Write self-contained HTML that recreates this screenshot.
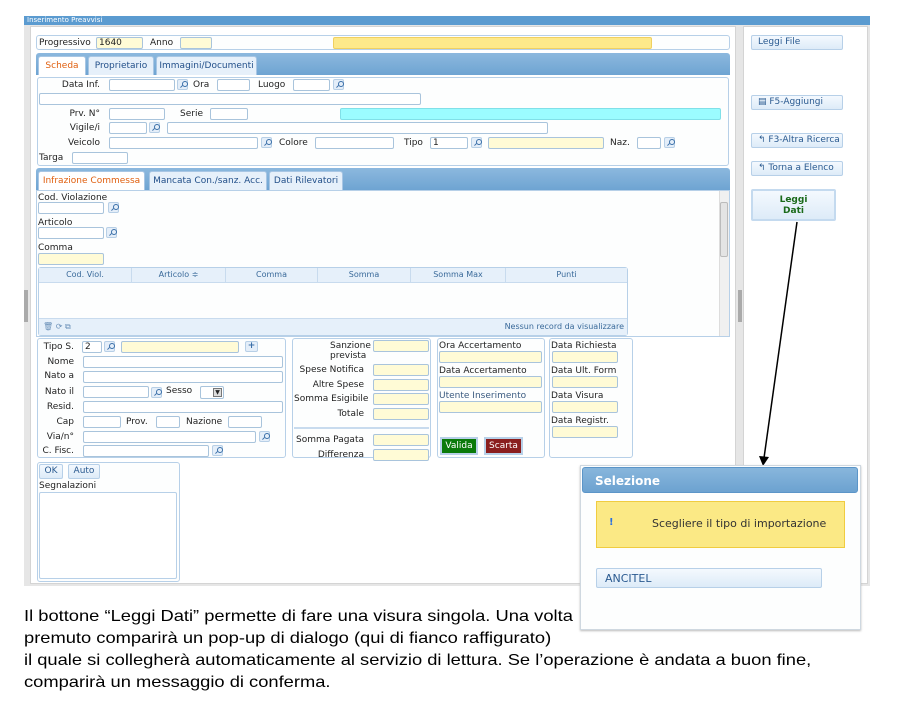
<!DOCTYPE html>
<html><head><meta charset="utf-8">
<style>
*{margin:0;padding:0;box-sizing:border-box}
body{width:905px;height:722px;background:#fff;position:relative;overflow:hidden;font-family:"DejaVu Sans","Liberation Sans",sans-serif;font-size:9px;color:#222}
div,span{position:absolute}
.i{height:12px;border:1px solid #a9c4dc;border-radius:2px;background:#fff;font-size:9px;padding-left:2px;line-height:10px}
.y{background:#fffbd6}
.l{white-space:nowrap;font-size:9px;line-height:11px}
.s{width:11px;height:11px;border:1px solid #b7cfe6;border-radius:2px;background:#e4eef9}
.s:after{content:"";position:absolute;left:4px;top:1px;width:4px;height:4px;border:1px solid #3a6fa8;border-radius:50%}
.s:before{content:"";position:absolute;left:2px;top:6px;width:3px;height:1px;background:#3a6fa8;transform:rotate(-45deg)}
.box{border:1px solid #b7d0e8;border-radius:3px;background:#fdfefe}
.tabstrip{background:linear-gradient(#8cb8de,#6ea4d2);border-radius:3px 3px 0 0}
.tab{top:3px;height:19px;background:#e6f0fa;border:1px solid #a8c6e4;border-bottom:none;border-radius:3px 3px 0 0;color:#23508a;text-align:center;line-height:18px;font-size:9px}
.tab.a{background:#fff;color:#e06010}
.btn{border:1px solid #b7d0e8;border-radius:2px;background:linear-gradient(#f4f9fe,#ddebf8);color:#2a5a90;font-size:9px;line-height:13px;padding-left:6px}
.r{text-align:right}
</style></head><body>
<div style="left:24px;top:16px;width:846px;height:570px;background:#e6e6e6"></div>
<div style="left:24px;top:16px;width:846px;height:9px;background:#5b9bd0;color:#fff;font-size:7px;line-height:9px;padding-left:3px">Inserimento Preavvisi</div>
<div style="left:30px;top:26px;width:706px;height:558px;background:#fff;border:1px solid #d4d4d4"></div>
<div style="left:743px;top:26px;width:125px;height:558px;background:#fff;border:1px solid #d4d4d4"></div>
<div style="left:738px;top:290px;width:4px;height:32px;background:#aaa"></div>
<div style="left:24px;top:290px;width:4px;height:32px;background:#aaa"></div>

<div class="box" style="left:36px;top:35px;width:694px;height:15px"></div>
<span class="l" style="left:39px;top:38px">Progressivo</span>
<div class="i y" style="left:96px;top:37px;width:47px">1640</div>
<span class="l" style="left:150px;top:38px">Anno</span>
<div class="i y" style="left:180px;top:37px;width:32px"></div>
<div class="i" style="left:333px;top:37px;width:319px;background:#fde98a;border-color:#f0d060"></div>

<div class="tabstrip" style="left:36px;top:53px;width:694px;height:22px"></div>
<div class="tab a" style="left:38px;top:56px;width:48px">Scheda</div>
<div class="tab" style="left:88px;top:56px;width:66px">Proprietario</div>
<div class="tab" style="left:156px;top:56px;width:101px">Immagini/Documenti</div>
<div class="box" style="left:37px;top:77px;width:692px;height:89px"></div>
<span class="l r" style="left:50px;top:80px;width:50px">Data Inf.</span>
<div class="i" style="left:109px;top:79px;width:66px"></div>
<div class="s" style="left:177px;top:79px"></div>
<span class="l" style="left:193px;top:80px">Ora</span>
<div class="i" style="left:217px;top:79px;width:33px"></div>
<span class="l" style="left:258px;top:80px">Luogo</span>
<div class="i" style="left:293px;top:79px;width:37px"></div>
<div class="s" style="left:333px;top:79px"></div>
<div class="i" style="left:39px;top:93px;width:382px"></div>
<span class="l r" style="left:50px;top:109px;width:50px">Prv. N°</span>
<div class="i" style="left:109px;top:108px;width:56px"></div>
<span class="l" style="left:180px;top:109px">Serie</span>
<div class="i" style="left:210px;top:108px;width:38px"></div>
<div class="i" style="left:340px;top:108px;width:381px;background:#9bfcff;border-color:#80e0e8"></div>
<span class="l r" style="left:50px;top:123px;width:50px">Vigile/i</span>
<div class="i" style="left:109px;top:122px;width:38px"></div>
<div class="s" style="left:149px;top:122px"></div>
<div class="i" style="left:167px;top:122px;width:381px"></div>
<span class="l r" style="left:50px;top:138px;width:50px">Veicolo</span>
<div class="i" style="left:109px;top:137px;width:149px"></div>
<div class="s" style="left:261px;top:137px"></div>
<span class="l" style="left:279px;top:138px">Colore</span>
<div class="i" style="left:315px;top:137px;width:79px"></div>
<span class="l" style="left:404px;top:138px">Tipo</span>
<div class="i" style="left:430px;top:137px;width:38px">1</div>
<div class="s" style="left:471px;top:137px"></div>
<div class="i y" style="left:488px;top:137px;width:116px"></div>
<span class="l" style="left:610px;top:138px">Naz.</span>
<div class="i" style="left:637px;top:137px;width:24px"></div>
<div class="s" style="left:664px;top:137px"></div>
<span class="l" style="left:39px;top:153px">Targa</span>
<div class="i" style="left:72px;top:152px;width:56px"></div>

<div class="tabstrip" style="left:36px;top:168px;width:694px;height:22px"></div>
<div class="tab a" style="left:38px;top:171px;width:107px">Infrazione Commessa</div>
<div class="tab" style="left:149px;top:171px;width:118px">Mancata Con./sanz. Acc.</div>
<div class="tab" style="left:269px;top:171px;width:74px">Dati Rilevatori</div>
<div class="box" style="left:36px;top:190px;width:694px;height:147px;border-radius:0"></div>
<div style="left:719px;top:191px;width:10px;height:145px;background:#f0f0f0;border-left:1px solid #ddd"></div>
<div style="left:720px;top:202px;width:8px;height:55px;background:#e4e4e4;border:1px solid #bbb;border-radius:2px"></div>
<span class="l" style="left:38px;top:193px">Cod. Violazione</span>
<div class="i" style="left:38px;top:202px;width:66px"></div>
<div class="s" style="left:108px;top:202px"></div>
<span class="l" style="left:38px;top:218px">Articolo</span>
<div class="i" style="left:38px;top:227px;width:66px"></div>
<div class="s" style="left:106px;top:227px"></div>
<span class="l" style="left:38px;top:243px">Comma</span>
<div class="i y" style="left:38px;top:253px;width:66px"></div>
<div style="left:38px;top:267px;width:590px;height:69px;border:1px solid #b7d0e8;border-radius:3px;background:#fdfefe"></div>
<div style="left:39px;top:268px;width:588px;height:15px;background:#e6f0fa;border-bottom:1px solid #c8dbee;color:#3a6a9a;font-size:8px;line-height:14px">
<span style="left:0;width:93px;text-align:center;border-right:1px solid #c8dbee;height:15px">Cod. Viol.</span>
<span style="left:93px;width:94px;text-align:center;border-right:1px solid #c8dbee;height:15px">Articolo ≑</span>
<span style="left:187px;width:92px;text-align:center;border-right:1px solid #c8dbee;height:15px">Comma</span>
<span style="left:279px;width:93px;text-align:center;border-right:1px solid #c8dbee;height:15px">Somma</span>
<span style="left:372px;width:95px;text-align:center;border-right:1px solid #c8dbee;height:15px">Somma Max</span>
<span style="left:467px;width:121px;text-align:center">Punti</span>
</div>
<div style="left:39px;top:318px;width:588px;height:17px;background:#e6f0fa;border-top:1px solid #c8dbee;color:#3a6a9a;font-size:8px;line-height:16px">
<span style="left:4px;color:#6a90b8">🗑 ⟳ ⧉</span>
<span style="right:3px">Nessun record da visualizzare</span>
</div>

<div class="box" style="left:37px;top:338px;width:249px;height:120px"></div>
<span class="l r" style="left:40px;top:342px;width:34px">Tipo S.</span>
<div class="i" style="left:82px;top:341px;width:20px">2</div>
<div class="s" style="left:104px;top:341px"></div>
<div class="i y" style="left:121px;top:341px;width:118px"></div>
<div style="left:245px;top:341px;width:13px;height:11px;border:1px solid #b7cfe6;border-radius:2px;background:#e4eef9;text-align:center;line-height:9px;color:#3a6fa8;font-weight:bold">+</div>
<span class="l r" style="left:40px;top:357px;width:34px">Nome</span>
<div class="i" style="left:83px;top:356px;width:200px"></div>
<span class="l r" style="left:40px;top:371px;width:34px">Nato a</span>
<div class="i" style="left:83px;top:371px;width:200px"></div>
<span class="l r" style="left:40px;top:387px;width:34px">Nato il</span>
<div class="i" style="left:83px;top:386px;width:66px"></div>
<div class="s" style="left:151px;top:387px"></div>
<span class="l" style="left:166px;top:386px">Sesso</span>
<div class="i" style="left:200px;top:386px;width:24px;height:13px"><span style="right:1px;top:1px;width:9px;height:9px;background:#ddd;border:1px solid #777;font-size:6px;text-align:center;line-height:8px">▼</span></div>
<span class="l r" style="left:40px;top:402px;width:34px">Resid.</span>
<div class="i" style="left:83px;top:401px;width:200px"></div>
<span class="l r" style="left:40px;top:417px;width:34px">Cap</span>
<div class="i" style="left:83px;top:416px;width:38px"></div>
<span class="l" style="left:126px;top:417px">Prov.</span>
<div class="i" style="left:156px;top:416px;width:24px"></div>
<span class="l" style="left:186px;top:417px">Nazione</span>
<div class="i" style="left:228px;top:416px;width:34px"></div>
<span class="l r" style="left:40px;top:432px;width:34px">Via/n°</span>
<div class="i" style="left:83px;top:431px;width:173px"></div>
<div class="s" style="left:259px;top:431px"></div>
<span class="l r" style="left:40px;top:446px;width:34px">C. Fisc.</span>
<div class="i" style="left:83px;top:445px;width:126px"></div>
<div class="s" style="left:212px;top:445px"></div>

<div class="box" style="left:292px;top:338px;width:139px;height:120px"></div>
<span class="l" style="left:330px;top:341px">Sanzione</span>
<span class="l" style="left:330px;top:351px">prevista</span>
<span class="l r" style="left:294px;top:365px;width:70px">Spese Notifica</span>
<span class="l r" style="left:294px;top:380px;width:70px">Altre Spese</span>
<span class="l r" style="left:294px;top:394px;width:70px">Somma Esigibile</span>
<span class="l r" style="left:294px;top:409px;width:70px">Totale</span>
<span class="l r" style="left:294px;top:435px;width:70px">Somma Pagata</span>
<span class="l r" style="left:294px;top:450px;width:70px">Differenza</span>
<div class="i y" style="left:373px;top:340px;width:56px"></div>
<div class="i y" style="left:373px;top:364px;width:56px"></div>
<div class="i y" style="left:373px;top:379px;width:56px"></div>
<div class="i y" style="left:373px;top:393px;width:56px"></div>
<div class="i y" style="left:373px;top:408px;width:56px"></div>
<div style="left:294px;top:427px;width:135px;height:2px;border:1px solid #c8dbee"></div>
<div class="i y" style="left:373px;top:434px;width:56px"></div>
<div class="i y" style="left:373px;top:449px;width:56px"></div>

<div class="box" style="left:437px;top:338px;width:108px;height:120px"></div>
<span class="l" style="left:439px;top:341px">Ora Accertamento</span>
<div class="i y" style="left:439px;top:351px;width:103px"></div>
<span class="l" style="left:439px;top:366px">Data Accertamento</span>
<div class="i y" style="left:439px;top:376px;width:103px"></div>
<span class="l" style="left:439px;top:391px;color:#3a5a80">Utente Inserimento</span>
<div class="i y" style="left:439px;top:401px;width:103px"></div>
<div style="left:440px;top:437px;width:38px;height:18px;background:#0a7a0a;border:2px solid #b7d0e8;color:#fff;text-align:center;line-height:14px;font-size:9px">Valida</div>
<div style="left:484px;top:437px;width:39px;height:18px;background:#8a1e1e;border:2px solid #b7d0e8;color:#fff;text-align:center;line-height:14px;font-size:9px">Scarta</div>
<div class="box" style="left:549px;top:338px;width:84px;height:120px"></div>
<span class="l" style="left:551px;top:341px">Data Richiesta</span>
<div class="i y" style="left:552px;top:351px;width:66px"></div>
<span class="l" style="left:551px;top:366px">Data Ult. Form</span>
<div class="i y" style="left:552px;top:376px;width:66px"></div>
<span class="l" style="left:551px;top:391px">Data Visura</span>
<div class="i y" style="left:552px;top:401px;width:66px"></div>
<span class="l" style="left:551px;top:416px">Data Registr.</span>
<div class="i y" style="left:552px;top:426px;width:66px"></div>

<div class="box" style="left:37px;top:462px;width:143px;height:120px"></div>
<div class="btn" style="left:39px;top:464px;width:24px;height:15px;padding:0;text-align:center">OK</div>
<div class="btn" style="left:68px;top:464px;width:32px;height:15px;padding:0;text-align:center">Auto</div>
<span class="l" style="left:39px;top:481px">Segnalazioni</span>
<div style="left:39px;top:492px;width:138px;height:87px;border:1px solid #b7d0e8;border-radius:2px;background:#fff"></div>

<div class="btn" style="left:751px;top:35px;width:92px;height:15px">Leggi File</div>
<div class="btn" style="left:751px;top:95px;width:92px;height:15px">▤ F5-Aggiungi</div>
<div class="btn" style="left:751px;top:133px;width:92px;height:15px">↰ F3-Altra Ricerca</div>
<div class="btn" style="left:751px;top:161px;width:92px;height:15px">↰ Torna a Elenco</div>
<div class="btn" style="left:751px;top:189px;width:85px;height:32px;padding:0;text-align:center;color:#1a6a1a;font-weight:bold;line-height:11px;padding-top:4px;border:2px solid #c4daef">Leggi<br>Dati</div>

<svg style="position:absolute;left:0;top:0" width="905" height="722"><line x1="797" y1="222" x2="764" y2="458" stroke="#000" stroke-width="1.5"/><polygon points="759,456 769,457 763,466" fill="#000"/></svg>

<div style="left:580px;top:465px;width:281px;height:165px;background:#fdfefe;border:1px solid #cfd8e0;box-shadow:0 1px 2px #bbb"></div>
<div style="left:582px;top:467px;width:276px;height:26px;background:linear-gradient(#88b6dc,#6ca2d0);border:1px solid #5b95c8;border-radius:3px;color:#fff;font-weight:bold;font-size:12px;line-height:26px;padding-left:12px">Selezione</div>
<div style="left:596px;top:501px;width:249px;height:47px;background:#fbe985;border:1px solid #f0cc40"></div>
<span style="left:609px;top:517px;color:#2a70e0;font-weight:bold;font-size:10px">!</span>
<span style="left:652px;top:517px;font-size:11px;color:#333">Scegliere il tipo di importazione</span>
<div class="btn" style="left:596px;top:568px;width:226px;height:20px;font-size:11px;line-height:19px;padding-left:8px">ANCITEL</div>

<div style="left:24px;top:606px;font-family:'Liberation Sans',Arial,sans-serif;font-size:16px;line-height:22px;color:#000;white-space:nowrap;transform:scaleX(1.145);transform-origin:0 0">Il bottone “Leggi Dati” permette di fare una visura singola. Una volta<br>premuto comparirà un pop-up di dialogo (qui di fianco raffigurato)<br>il quale si collegherà automaticamente al servizio di lettura. Se l’operazione è andata a buon fine,<br>comparirà un messaggio di conferma.</div>
</body></html>
